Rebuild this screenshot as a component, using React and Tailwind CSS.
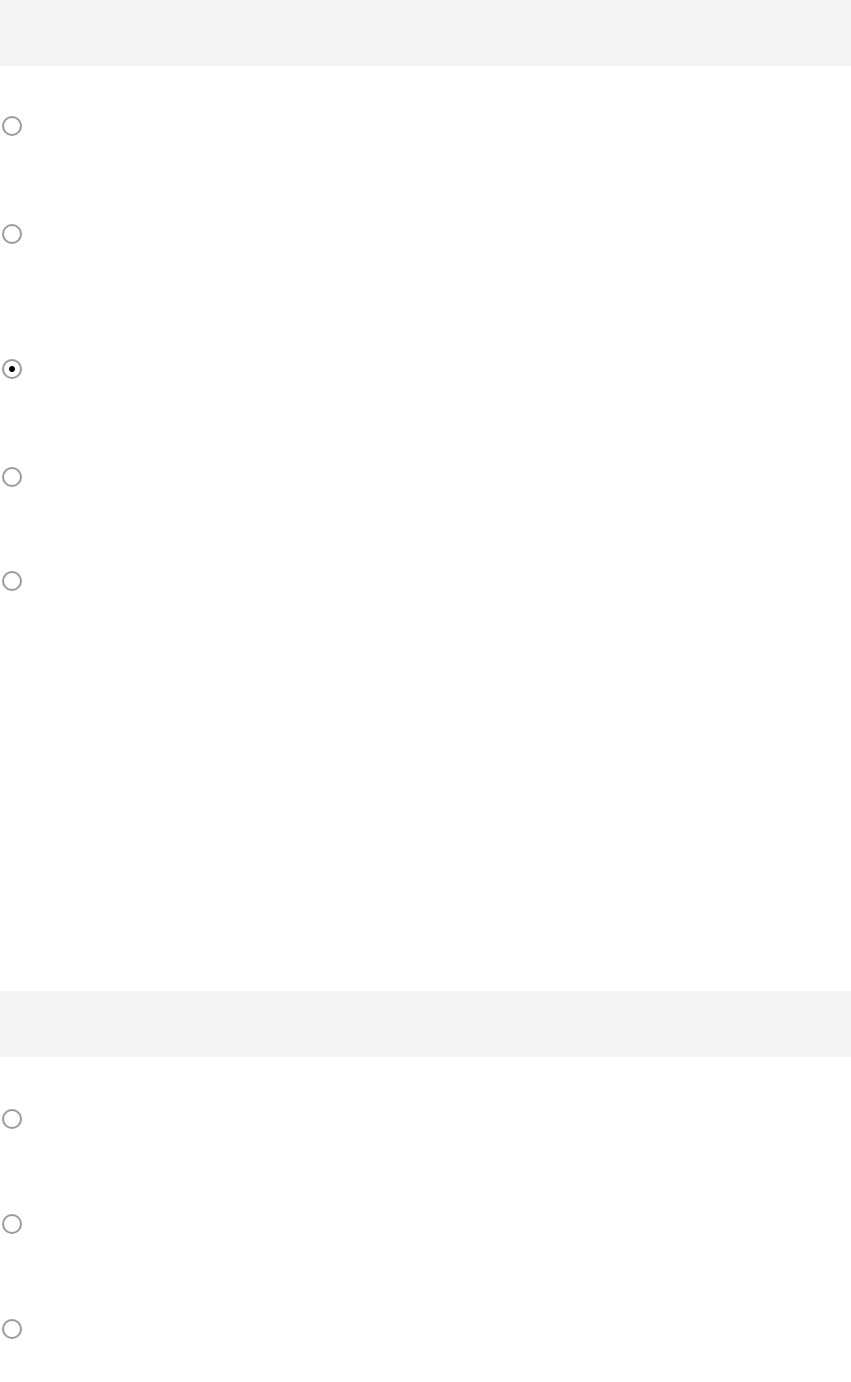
import { useState } from "react";

const groups = [
  { id: "q1", top: 50, rows: [108, 135, 108, 104, 420], picked: 2 },
  { id: "q2", top: 52, rows: [105, 105, 63], picked: -1 },
];

function Group({ group, value, onPick }) {
  return (
    <section className="w-full">
      <div className="h-[66px] w-full bg-[#f4f4f4]" />
      <div className="flex flex-col" style={{ paddingTop: group.top }}>
        {group.rows.map((h, i) => (
          <label key={i} className="flex items-start" style={{ height: h }}>
            <input
              type="radio"
              name={group.id}
              checked={value === i}
              onChange={() => onPick(i)}
              className="ml-[2px] h-5 w-5 appearance-none rounded-full border-2 border-[#9a9a9a] bg-white checked:bg-[radial-gradient(circle,#000_0_2.5px,transparent_3.5px)]"
            />
          </label>
        ))}
      </div>
    </section>
  );
}

export default function App() {
  const [answers, setAnswers] = useState(
    Object.fromEntries(groups.map((g) => [g.id, g.picked]))
  );

  return (
    <div className="min-h-screen w-full bg-white font-['Liberation_Sans',sans-serif]">
      {groups.map((g) => (
        <Group
          key={g.id}
          group={g}
          value={answers[g.id]}
          onPick={(i) => setAnswers((a) => ({ ...a, [g.id]: i }))}
        />
      ))}
    </div>
  );
}
